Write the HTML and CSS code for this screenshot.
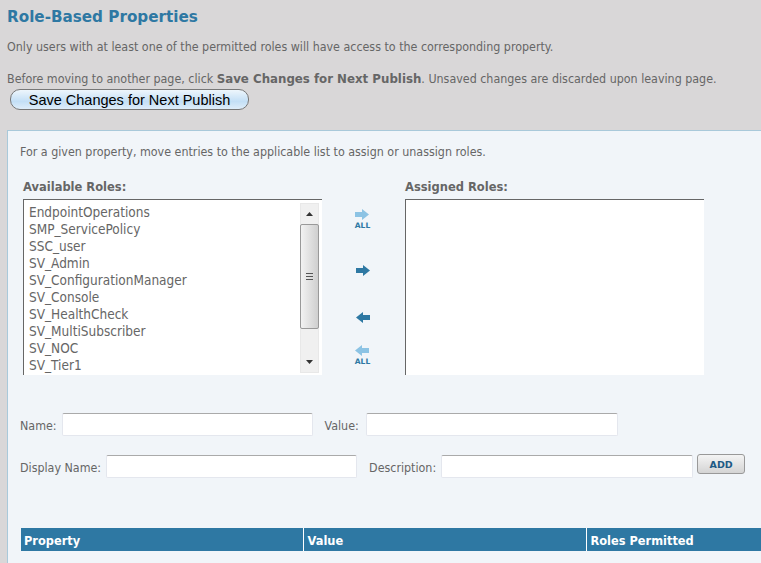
FILE: index.html
```html
<!DOCTYPE html>
<html lang="en">

<head>
    <meta charset="UTF-8">
    <title>Role-Based Properties</title>
    <link rel="stylesheet" href="styles.css">
</head>

<body>
    <div class="intro">
        <h1>Role-Based Properties</h1>
        <p class="note">Only users with at least one of the permitted roles will have access to the corresponding property.</p>
        <p class="note save-note">Before moving to another page, click <b>Save Changes for Next Publish</b>. Unsaved changes are discarded upon leaving page.</p>
        <button class="save-button">Save Changes for Next Publish</button>
    </div>

    <div class="panel">
        <p class="note panel-note">For a given property, move entries to the applicable list to assign or unassign roles.</p>

        <div class="role-picker">
            <div class="role-column">
                <div class="role-title">Available Roles:</div>
                <div class="role-box">
                    <ul class="role-list">
                        <li>EndpointOperations</li>
                        <li>SMP_ServicePolicy</li>
                        <li>SSC_user</li>
                        <li>SV_Admin</li>
                        <li>SV_ConfigurationManager</li>
                        <li>SV_Console</li>
                        <li>SV_HealthCheck</li>
                        <li>SV_MultiSubscriber</li>
                        <li>SV_NOC</li>
                        <li>SV_Tier1</li>
                    </ul>
                    <div class="scrollbar">
                        <div class="scroll-arrow"><svg width="7" height="4" viewBox="0 0 7 4"><path d="M3.5 0L7 4H0z" fill="#333"/></svg></div>
                        <div class="scroll-thumb"><span class="grip"></span></div>
                        <div class="scroll-arrow"><svg width="7" height="4" viewBox="0 0 7 4"><path d="M0 0H7L3.500 4z" fill="#333"/></svg></div>
                    </div>
                </div>
            </div>

            <div class="move-buttons">
                <div class="move-all">
                    <svg width="14" height="11" viewBox="0 0 14 11"><path d="M0 3H7V0L14 5.500L7 11V8H0z" fill="#8cc3e4"/></svg>
                    <span>ALL</span>
                </div>
                <svg class="move-one" width="14" height="11" viewBox="0 0 14 11"><path d="M0 3H7V0L14 5.500L7 11V8H0z" fill="#2e78a3"/></svg>
                <svg class="move-one" width="14" height="11" viewBox="0 0 14 11"><path d="M14 3H7V0L0 5.500L7 11V8H14z" fill="#2e78a3"/></svg>
                <div class="move-all">
                    <svg width="14" height="11" viewBox="0 0 14 11"><path d="M14 3H7V0L0 5.500L7 11V8H14z" fill="#8cc3e4"/></svg>
                    <span>ALL</span>
                </div>
            </div>

            <div class="role-column">
                <div class="role-title">Assigned Roles:</div>
                <div class="role-box"></div>
            </div>
        </div>

        <div class="field-row">
            <label>Name:</label>
            <input type="text" class="field">
            <label class="second-label value-label">Value:</label>
            <input type="text" class="field">
        </div>
        <div class="field-row field-row-add">
            <label>Display Name:</label>
            <input type="text" class="field">
            <label class="second-label">Description:</label>
            <input type="text" class="field">
            <button class="add-button">ADD</button>
        </div>

        <table class="property-table">
            <thead>
                <tr>
                    <th>Property</th>
                    <th>Value</th>
                    <th>Roles Permitted</th>
                </tr>
            </thead>
        </table>
    </div>
</body>

</html>
```

FILE: styles.css
```css
html, body {
    height: 563px;
    overflow: hidden;
}

body {
    margin: 0;
    background-color: #d9d7d8;
    font-family: Tahoma, "DejaVu Sans Condensed", "DejaVu Sans", sans-serif;
    font-size: 12.36px;
    color: #666;
}

b {
    font-family: "DejaVu Sans", sans-serif;
    font-size: 11.8px;
}

.intro {
    padding: 9px 0 0 7px;
    height: 121px;
}

h1 {
    margin: 0;
    font-family: "DejaVu Sans", sans-serif;
    font-size: 15.2px;
    line-height: 17px;
    color: #2e78a3;
}

.note {
    margin: 0;
    line-height: 15px;
}

.intro .note {
    margin-top: 14px;
}

.intro .save-note {
    margin-top: 17px;
}

.save-button {
    display: block;
    width: 239px;
    height: 21px;
    margin: 2px 0 0 3px;
    padding: 0;
    border: 1px solid #777;
    border-radius: 10px;
    background: linear-gradient(#eef6fc, #c3dff6 60%, #deedfa);
    font-family: "Liberation Sans", sans-serif;
    font-size: 14.5px;
    color: #000;
}

.panel {
    margin-left: 7px;
    height: 433px;
    padding: 14px 0 0 12px;
    box-sizing: border-box;
    background-color: #f1f5f9;
    border-top: 1px solid #a9c9da;
    border-left: 1px solid #a9c9da;
}

.role-picker {
    display: flex;
    margin: 20px 0 0 3px;
}

.role-title {
    font-family: "DejaVu Sans", sans-serif;
    font-size: 11.5px;
    font-weight: bold;
    line-height: 15px;
    margin-bottom: 4px;
}

.role-box {
    display: flex;
    width: 299px;
    height: 176px;
    box-sizing: border-box;
    background-color: #fff;
    border-top: 1px solid #666;
    border-left: 1px solid #666;
}

.role-list {
    flex: 1;
    margin: 0;
    padding: 4px 0 0 5px;
    list-style: none;
    font-size: 13.5px;
    line-height: 17px;
}

.scrollbar {
    display: flex;
    flex-direction: column;
    width: 19px;
    margin: 3px 3px 2px 0;
    box-sizing: border-box;
    background-color: #f0f0f0;
    border: 1px solid #e8e8e8;
}

.scroll-arrow {
    display: flex;
    align-items: center;
    justify-content: center;
    height: 20px;
}

.scroll-thumb {
    display: flex;
    flex: 1;
    align-items: center;
    justify-content: center;
    margin: 0 -1px 23px;
    border: 1px solid #999;
    border-radius: 2px;
    background: linear-gradient(90deg, #f2f2f2, #cfcfcf);
}

.grip {
    width: 7px;
    height: 7px;
    background: repeating-linear-gradient(#555 0, #555 1px, transparent 1px, transparent 3px);
}

.move-buttons {
    display: flex;
    flex-direction: column;
    align-items: center;
    width: 83px;
    box-sizing: border-box;
    padding: 29px 2px 0 0;
}

.move-buttons svg {
    display: block;
}

.move-all span {
    display: block;
    margin-top: 2px;
    font-family: "DejaVu Sans", sans-serif;
    font-size: 7.5px;
    font-weight: bold;
    line-height: 8px;
    color: #2e78a3;
    text-align: center;
}

.move-one {
    margin-top: 35px;
}

.move-one + .move-one {
    margin-top: 36px;
}

.move-one + .move-all {
    margin-top: 22px;
}

.field-row {
    display: flex;
    align-items: center;
    margin-top: 38px;
}

.field-row-add {
    margin-top: 19px;
}

.field-row label {
    margin-top: 2px;
    margin-right: 5px;
}

.field-row .second-label {
    margin-left: 12px;
}

.field-row .value-label {
    margin-right: 7px;
}

.field {
    width: 251px;
    height: 23px;
    padding: 0;
    box-sizing: border-box;
    background-color: #fff;
    border: 1px solid #e4e7ee;
    border-top-color: #aaa;
    border-radius: 2px;
}

.second-label + .field {
    width: 252px;
}

.add-button {
    width: 48px;
    height: 20px;
    margin: -5px 0 0 4px;
    padding: 0;
    border: 1px solid #999;
    border-radius: 3px;
    background: linear-gradient(#f4f4f4, #d4d4d4);
    font-family: "DejaVu Sans", sans-serif;
    font-size: 9.5px;
    font-weight: bold;
    color: #1d5a85;
}

.property-table {
    width: 740px;
    margin: 50px 0 0 1px;
    border-collapse: collapse;
    table-layout: fixed;
}

.property-table th {
    height: 23px;
    padding: 2px 0 0 4px;
    box-sizing: border-box;
    background-color: #2e78a3;
    border-left: 1px solid #fff;
    color: #fff;
    font-family: "DejaVu Sans", sans-serif;
    font-size: 11.4px;
    text-align: left;
}

.property-table th:first-child {
    width: 282px;
    padding-left: 3px;
    border-left: none;
}

.property-table th:nth-child(2) {
    width: 283px;
}
```
